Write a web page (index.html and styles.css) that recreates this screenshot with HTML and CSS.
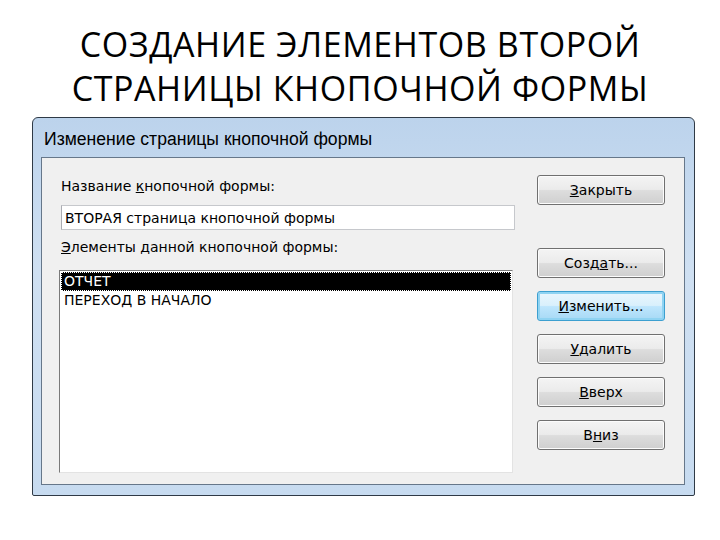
FILE: index.html
```html
<!DOCTYPE html>
<html lang="ru">
<head>
    <meta charset="UTF-8">
    <title>Создание элементов второй страницы кнопочной формы</title>
    <link rel="stylesheet" href="styles.css">
</head>
<body>

    <h1 class="slide-title">СОЗДАНИЕ ЭЛЕМЕНТОВ ВТОРОЙ<br>СТРАНИЦЫ КНОПОЧНОЙ ФОРМЫ</h1>

    <!-- Окно диалога -->
    <div class="window">
        <div class="caption">Изменение страницы кнопочной формы</div>

        <div class="panel">
            <div class="left-col">
                <label class="field-label first">Название <u>к</u>нопочной формы:</label>
                <div class="text-box">ВТОРАЯ страница кнопочной формы</div>

                <label class="field-label"><u>Э</u>лементы данной кнопочной формы:</label>
                <div class="list-box">
                    <div class="list-item selected">ОТЧЕТ</div>
                    <div class="list-item">ПЕРЕХОД В НАЧАЛО</div>
                </div>
            </div>

            <div class="right-col">
                <button class="btn close-btn"><u>З</u>акрыть</button>
                <button class="btn">Созд<u>а</u>ть...</button>
                <button class="btn focused"><u>И</u>зменить...</button>
                <button class="btn"><u>У</u>далить</button>
                <button class="btn"><u>В</u>верх</button>
                <button class="btn">В<u>н</u>из</button>
            </div>
        </div>
    </div>

</body>
</html>
```

FILE: styles.css
```css
* {
    margin: 0;
    padding: 0;
    box-sizing: border-box;
}
body {
    background: #fff;
    width: 720px;
    height: 540px;
    overflow: hidden;
}
.slide-title {
    font-family: "Open Sans", "Noto Sans", sans-serif;
    font-weight: 400;
    font-size: 34px;
    line-height: 44px;
    letter-spacing: 0.6px;
    text-align: center;
    color: #000;
    padding-top: 22px;
    height: 117px;
}
.window {
    margin-left: 32px;
    width: 663px;
    height: 379px;
    border: 1px solid #2f3a46;
    border-radius: 6px 6px 2px 2px;
    background: linear-gradient(to bottom, #bcd3ec 0%, #cfe0f2 40%, #c7dbf0 100%);
    padding: 0 9px 10px 8px;
    display: flex;
    flex-direction: column;
}
.caption {
    height: 39px;
    padding-left: 3px;
    padding-top: 11px;
    font-family: "Liberation Sans", Arial, sans-serif;
    font-size: 17.6px;
    color: #000;
}
.panel {
    flex: 1;
    background: #f0f0f0;
    border: 1px solid #66778a;
    padding: 17px 19px 0 19px;
    display: flex;
    gap: 21px;
}
.left-col {
    width: 455px;
    display: flex;
    flex-direction: column;
}
.field-label {
    display: block;
    font-family: "DejaVu Sans", Tahoma, sans-serif;
    font-size: 14px;
    line-height: 16px;
    color: #000;
    margin-top: 9px;
}
.field-label.first {
    margin-top: 3px;
}
.text-box {
    margin-top: 11px;
    width: 454px;
    height: 25px;
    background: #fff;
    border: 1px solid #c6c8cc;
    border-left-color: #abadb3;
    padding: 4px 3px;
    font-family: "DejaVu Sans", Tahoma, sans-serif;
    font-size: 14px;
    line-height: 16px;
}
.list-box {
    margin-top: 15px;
    margin-left: -2px;
    width: 454px;
    height: 203px;
    background: #fff;
    border: 1px solid #e3e3e3;
    border-left-color: #7a7a7a;
    border-top-color: #7a7a7a;
    padding: 1px;
}
.list-item {
    height: 19px;
    padding-left: 3px;
    font-family: "DejaVu Sans", Tahoma, sans-serif;
    font-size: 14px;
    line-height: 19px;
    color: #000;
}
.list-item.selected {
    background: #000;
    color: #fff;
    outline: 1px dotted #fff;
    outline-offset: -1px;
}
.right-col {
    width: 128px;
    display: flex;
    flex-direction: column;
    gap: 13px;
}
.btn {
    height: 30px;
    width: 128px;
    border: 1px solid #707070;
    border-radius: 3px;
    background: linear-gradient(to bottom, #f4f4f4 0%, #ebebeb 48%, #dddddd 52%, #cfcfcf 100%);
    box-shadow: inset 0 0 0 1px #fcfcfc;
    font-family: "DejaVu Sans", Tahoma, sans-serif;
    font-size: 14px;
    color: #000;
}
.close-btn {
    margin-bottom: 30px;
}
.btn.focused {
    border-color: #3c9fd0;
    box-shadow: inset 0 0 0 2px #8fd3f2;
    background: linear-gradient(to bottom, #eaf6fd 0%, #d9f0fc 48%, #bee6fd 52%, #a7d9f5 100%);
}
```
